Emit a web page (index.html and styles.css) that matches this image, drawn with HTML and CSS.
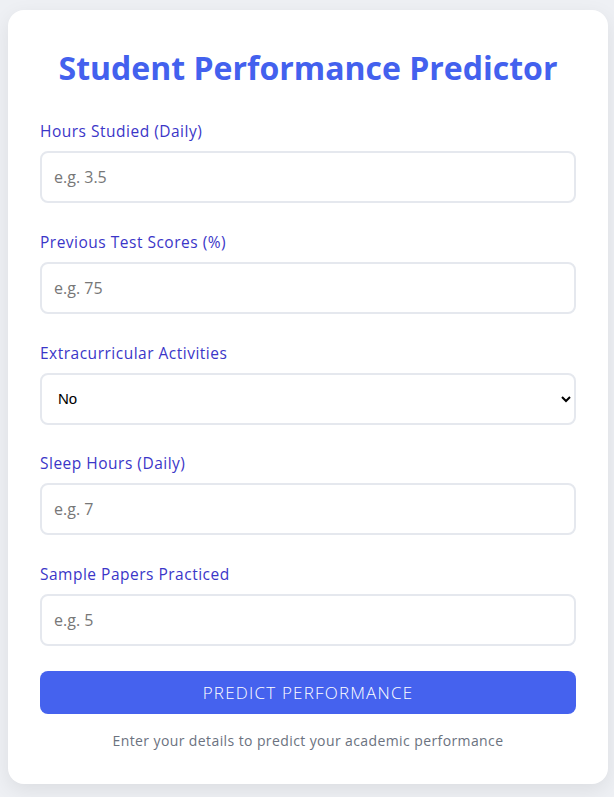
FILE: index.html
```html
<!DOCTYPE html>
<html lang="en">
<head>
<meta charset="utf-8">
<title>Student Performance Predictor</title>
<link rel="stylesheet" href="styles.css">
</head>
<body>
<main class="card">
  <h1 class="title">Student Performance Predictor</h1>
  <form class="form">
    <div class="field">
      <label class="label" for="hours">Hours Studied (Daily)</label>
      <input class="input" id="hours" type="text" placeholder="e.g. 3.5">
    </div>
    <div class="field">
      <label class="label" for="prev">Previous Test Scores (%)</label>
      <input class="input" id="prev" type="text" placeholder="e.g. 75">
    </div>
    <div class="field">
      <label class="label" for="extra">Extracurricular Activities</label>
      <select class="input select" id="extra">
        <option>No</option>
        <option>Yes</option>
      </select>
    </div>
    <div class="field">
      <label class="label" for="sleep">Sleep Hours (Daily)</label>
      <input class="input" id="sleep" type="text" placeholder="e.g. 7">
    </div>
    <div class="field">
      <label class="label" for="papers">Sample Papers Practiced</label>
      <input class="input" id="papers" type="text" placeholder="e.g. 5">
    </div>
    <button class="button" type="button">PREDICT PERFORMANCE</button>
  </form>
  <p class="note">Enter your details to predict your academic performance</p>
</main>
</body>
</html>
```

FILE: styles.css
```css
* { box-sizing: border-box; }
html, body { margin: 0; }
body {
  background: #eef0f4;
  font-family: "Open Sans", "Noto Sans", sans-serif;
  padding: 10px 6px 14px 8px;
}
.card {
  background: #ffffff;
  border-radius: 16px;
  box-shadow: 0 6px 20px rgba(0, 0, 0, 0.08);
  padding: 40px 32px 33px;
}
.title {
  margin: 0 0 33px;
  text-align: center;
  color: #4361ee;
  font-size: 32px;
  font-weight: 700;
  line-height: 36px;
}
.form { display: flex; flex-direction: column; }
.field { display: flex; flex-direction: column; margin-bottom: 26.75px; }
.label {
  color: #3b36c8;
  font-size: 15.5px;
  letter-spacing: 0.5px;
  line-height: 24px;
  margin-bottom: 8px;
}
.input {
  height: 52px;
  border: 2px solid #e5e8ee;
  border-radius: 8px;
  padding: 0 12px;
  font-family: inherit;
  font-size: 16px;
  color: #222;
  background: #fff;
  outline: none;
}
.input::placeholder { color: #777; }
.select {
  font-family: "Liberation Sans", Arial, sans-serif;
  font-size: 15px;
  color: #000;
  padding: 0 6px 0 12px;
}
.button {
  margin-top: -2px;
  height: 43px;
  border: none;
  border-radius: 8px;
  background: #4562ee;
  color: #fff;
  font-family: inherit;
  font-size: 17px;
  font-weight: 300;
  letter-spacing: 1.2px;
}
.note {
  margin: 17px 0 0;
  text-align: center;
  color: #6b7280;
  font-size: 14px;
  line-height: 20px;
  letter-spacing: 0.4px;
}
```
